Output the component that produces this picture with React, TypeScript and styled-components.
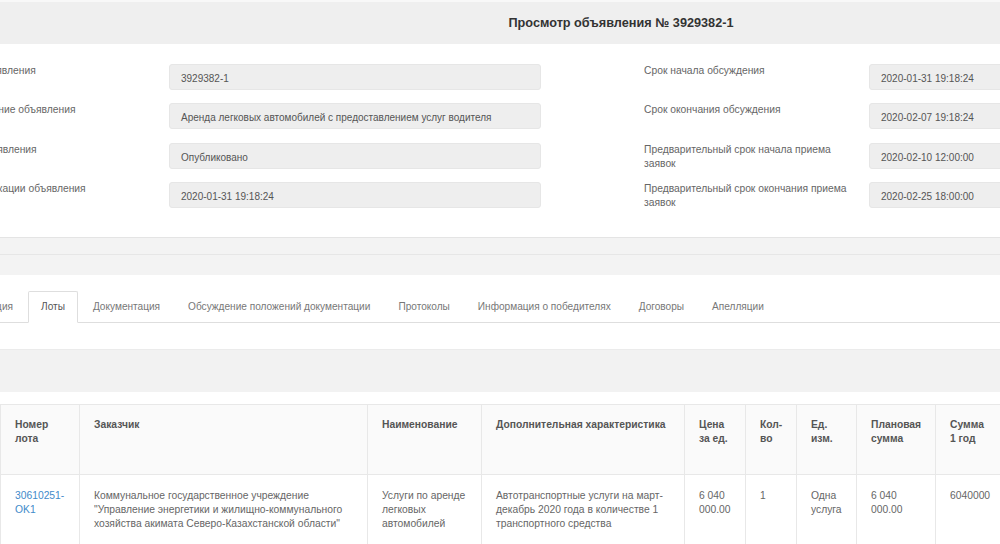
import React from 'react';
import styled, { createGlobalStyle } from 'styled-components';

const GlobalStyle = createGlobalStyle`
  html, body {
    margin: 0;
    padding: 0;
    overflow: hidden;
    background: #fff;
  }
  body {
    font-family: "Liberation Sans", Arial, sans-serif;
    font-size: 10.3px;
    color: #666;
  }
`;

const Page = styled.div`
  width: 1442px;
  margin-left: -100px;
  border-top: 2px solid #f8f8f8;
`;

const Heading = styled.div`
  height: 42px;
  line-height: 43px;
  background: #efefef;
  text-align: center;
  font-size: 12.7px;
  font-weight: bold;
  color: #333;
`;

const Form = styled.div`
  display: grid;
  grid-template-columns: 225px 372px 103px 225px 372px;
  grid-auto-rows: 26px;
  row-gap: 13.3px;
  padding: 20px 0 29px 44px;
  border-bottom: 1px solid #e4e4e4;
`;

const Label = styled.div`
  line-height: 14px;
  padding-right: 16px;
  color: #666;
`;

const Field = styled.div`
  background: #eee;
  border: 1px solid #e6e6e6;
  border-radius: 3px;
  padding: 1px 11px 0;
  line-height: 25px;
  font-size: 10px;
  color: #555;
  white-space: nowrap;
  overflow: hidden;
`;

const Band = styled.div<{ h: number; line?: boolean }>`
  height: ${p => p.h}px;
  background: #f3f3f3;
  border-bottom: ${p => (p.line ? '1px solid #e6e6e6' : 'none')};
`;

const TabsArea = styled.div`
  padding: 16px 0 26px 4px;
  background: #fff;
`;

const TabList = styled.ul`
  display: flex;
  list-style: none;
  margin: 0;
  padding: 0;
  border-bottom: 1px solid #dedede;
`;

const Tab = styled.li<{ active?: boolean }>`
  margin-right: 2px;
  margin-bottom: -1px;
  padding: 8px 12px;
  line-height: 14px;
  font-size: 10.1px;
  color: ${p => (p.active ? '#555' : '#777')};
  background: ${p => (p.active ? '#fff' : 'transparent')};
  border: 1px solid ${p => (p.active ? '#dedede' : 'transparent')};
  border-bottom-color: ${p => (p.active ? '#fff' : 'transparent')};
  border-radius: 2px 2px 0 0;
  white-space: nowrap;
`;

const GrayStrip = styled.div`
  height: 42px;
  background: #f2f2f2;
  border-top: 1px solid #ebebeb;
`;

const TableWrap = styled.div`
  padding: 12px 0 0 100px;
`;

const Table = styled.table`
  border-collapse: collapse;
  table-layout: fixed;
  width: 1005px;
  border-top: 1px solid #e8e8e8;
  border-left: 1px solid #e8e8e8;
`;

const Th = styled.th<{ w: number }>`
  width: ${p => p.w}px;
  height: 70px;
  box-sizing: border-box;
  padding: 13px 14px;
  vertical-align: top;
  text-align: left;
  font-weight: bold;
  line-height: 14px;
  color: #555;
  background: #fafafa;
  border-right: 1px solid #e8e8e8;
  border-bottom: 1px solid #e8e8e8;
`;

const Td = styled.td`
  padding: 14px 14px;
  height: 72px;
  vertical-align: top;
  line-height: 14px;
  color: #666;
  border-right: 1px solid #e8e8e8;
`;

const LotLink = styled.a`
  color: #428bca;
  text-decoration: none;
`;

const leftRows = [
  ['Номер объявления', '3929382-1'],
  ['Наименование объявления', 'Аренда легковых автомобилей с предоставлением услуг водителя'],
  ['Статус объявления', 'Опубликовано'],
  ['Дата публикации объявления', '2020-01-31 19:18:24'],
];

const rightRows = [
  ['Срок начала обсуждения', '2020-01-31 19:18:24'],
  ['Срок окончания обсуждения', '2020-02-07 19:18:24'],
  ['Предварительный срок начала приема заявок', '2020-02-10 12:00:00'],
  ['Предварительный срок окончания приема заявок', '2020-02-25 18:00:00'],
];

const tabs = [
  'Общая информация',
  'Лоты',
  'Документация',
  'Обсуждение положений документации',
  'Протоколы',
  'Информация о победителях',
  'Договоры',
  'Апелляции',
];

const columns: [string, number][] = [
  ['Номер лота', 79],
  ['Заказчик', 288],
  ['Наименование', 114],
  ['Дополнительная характеристика', 203],
  ['Цена за ед.', 61],
  ['Кол-во', 51],
  ['Ед. изм.', 60],
  ['Плановая сумма', 79],
  ['Сумма 1 год', 70],
];

export default function App() {
  return (
    <>
      <GlobalStyle />
      <Page>
        <Heading>Просмотр объявления № 3929382-1</Heading>
        <Form>
          {leftRows.map(([label, value], i) => (
            <React.Fragment key={label}>
              <Label>{label}</Label>
              <Field>{value}</Field>
              <div />
              <Label>{rightRows[i][0]}</Label>
              <Field>{rightRows[i][1]}</Field>
            </React.Fragment>
          ))}
        </Form>
        <Band h={16} line />
        <Band h={20} />
        <TabsArea>
          <TabList>
            {tabs.map(t => (
              <Tab key={t} active={t === 'Лоты'}>{t}</Tab>
            ))}
          </TabList>
        </TabsArea>
        <GrayStrip />
        <TableWrap>
          <Table>
            <thead>
              <tr>
                {columns.map(([title, w]) => (
                  <Th key={title} w={w}>{title}</Th>
                ))}
              </tr>
            </thead>
            <tbody>
              <tr>
                <Td><LotLink href="#">30610251-OK1</LotLink></Td>
                <Td>Коммунальное государственное учреждение "Управление энергетики и жилищно-коммунального хозяйства акимата Северо-Казахстанской области"</Td>
                <Td>Услуги по аренде легковых автомобилей</Td>
                <Td>Автотранспортные услуги на март-декабрь 2020 года в количестве 1 транспортного средства</Td>
                <Td>6 040 000.00</Td>
                <Td>1</Td>
                <Td>Одна услуга</Td>
                <Td>6 040 000.00</Td>
                <Td>6040000</Td>
              </tr>
            </tbody>
          </Table>
        </TableWrap>
      </Page>
    </>
  );
}
